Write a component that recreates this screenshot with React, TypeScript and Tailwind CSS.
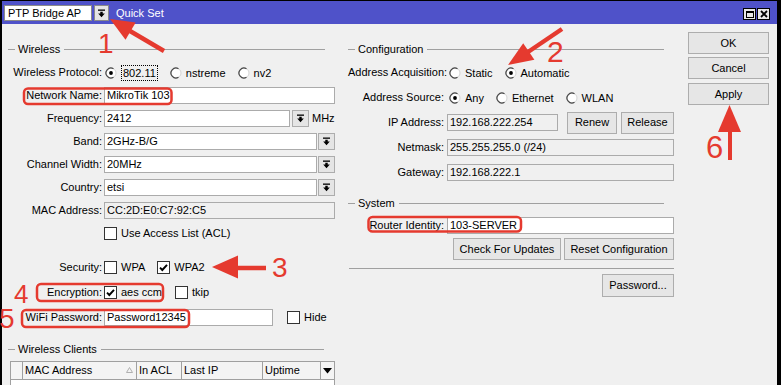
import React from "react";

const RED = "#e53a2f";

function Radio({ checked }: { checked?: boolean }) {
  return (
    <svg width="12" height="12" viewBox="0 0 12 12" className="shrink-0">
      <circle cx="6" cy="6" r="5" fill="#fff" stroke="#d4d4d4" strokeWidth="1" />
      <path d="M8.5 1.67 A5 5 0 1 0 8.5 10.33" fill="none" stroke="#4a4a4a" strokeWidth="1.2" />
      {checked && <circle cx="6" cy="6" r="1.9" fill="#000" />}
    </svg>
  );
}

function RadioItem({ label, checked, focus }: { label: string; checked?: boolean; focus?: boolean }) {
  return (
    <span className="inline-flex items-center gap-[4px]">
      <Radio checked={checked} />
      {focus ? (
        <span className="border border-dotted border-black px-[1px] leading-[14px]">{label}</span>
      ) : (
        <span className="leading-[14px]">{label}</span>
      )}
    </span>
  );
}

function Check({ checked }: { checked?: boolean }) {
  return (
    <span className="w-[13px] h-[13px] border border-[#333] bg-white flex items-center justify-center shrink-0">
      {checked && (
        <svg width="11" height="11" viewBox="0 0 11 11">
          <path d="M2 5.6 L4.3 8 L9 2.8" fill="none" stroke="#000" strokeWidth="1.9" />
        </svg>
      )}
    </span>
  );
}

function DropIcon() {
  return (
    <svg width="9" height="9" viewBox="0 0 9 9">
      <rect x="1" y="0.5" width="7" height="1.3" fill="#000" />
      <path d="M3.3 2.8 H5.7 V4.6 H7.8 L4.5 8.2 L1.2 4.6 H3.3 Z" fill="#000" />
    </svg>
  );
}

function DropBtn({ className = "" }: { className?: string }) {
  return (
    <div className={"w-[17px] h-[17px] border border-[#adadad] bg-[#e5e5e5] flex items-center justify-center shrink-0 " + className}>
      <DropIcon />
    </div>
  );
}

function Input({ value, className = "", disabled }: { value?: string; className?: string; disabled?: boolean }) {
  return (
    <div
      className={
        "h-[17px] border border-[#ababab] px-[2px] leading-[15px] whitespace-nowrap overflow-hidden shrink-0 " +
        (disabled ? "bg-[#f0f0f0] " : "bg-white ") +
        className
      }
    >
      {value}
    </div>
  );
}

function LRow({ label, h = "h-[23px]", children }: { label: string; h?: string; children?: React.ReactNode }) {
  return (
    <div className={"flex items-center " + h}>
      <span className="w-[96px] pr-[2px] text-right shrink-0 whitespace-nowrap">{label}</span>
      {children}
    </div>
  );
}

function RRow({ label, h = "h-[25px]", children }: { label: string; h?: string; children?: React.ReactNode }) {
  return (
    <div className={"flex items-center " + h}>
      <span className="w-[99px] pr-[3px] text-right shrink-0 whitespace-nowrap">{label}</span>
      {children}
    </div>
  );
}

function GroupHeader({ title, className = "" }: { title: string; className?: string }) {
  return (
    <div className={"flex items-center h-[16px] " + className}>
      <div className="w-[7px] h-px bg-[#a0a0a0]" />
      <span className="ml-[3px] mr-[4px] leading-[16px]">{title}</span>
      <div className="flex-1 h-px bg-[#a0a0a0]" />
    </div>
  );
}

function Btn({ children, className = "" }: { children?: React.ReactNode; className?: string }) {
  return (
    <div className={"h-[22px] border border-[#adadad] bg-[#e6e6e6] flex items-center justify-center whitespace-nowrap shrink-0 " + className}>
      {children}
    </div>
  );
}

function Overlay() {
  const box = { fill: "none", stroke: RED, strokeWidth: 2.5 };
  const digit = { fill: RED, fontFamily: "'Liberation Sans', Arial, sans-serif" };
  return (
    <svg className="absolute left-0 top-0 pointer-events-none" width="781" height="385" viewBox="0 0 781 385">
      {/* red boxes */}
      <rect x="24" y="88.5" width="147.5" height="15.5" rx="4" {...box} />
      <rect x="368.5" y="217" width="152.5" height="14.5" rx="4" {...box} />
      <rect x="37" y="284" width="126" height="17" rx="4" {...box} />
      <rect x="22" y="310" width="167" height="17" rx="4" {...box} />

      {/* arrow 1 */}
      <line x1="164" y1="51" x2="130" y2="31" stroke={RED} strokeWidth="4.5" />
      <polygon points="110,19 135.7,22.6 125.5,39.8" fill={RED} />
      {/* arrow 2 */}
      <line x1="562" y1="29" x2="528" y2="52" stroke={RED} strokeWidth="4.5" />
      <polygon points="508,65 534.4,59.8 523.2,43.2" fill={RED} />
      {/* arrow 3 */}
      <line x1="236" y1="268" x2="266" y2="268" stroke={RED} strokeWidth="4.5" />
      <polygon points="212,267 238,255.5 238,278.5" fill={RED} />
      {/* arrow 6 */}
      <line x1="730" y1="130" x2="730" y2="160" stroke={RED} strokeWidth="4" />
      <polygon points="729.5,105 718,132 741,132" fill={RED} />

      <text x="98" y="53" fontSize="28" style={digit}>1</text>
      <text x="547" y="62" fontSize="30" style={digit}>2</text>
      <text x="272" y="277" fontSize="28" style={digit}>3</text>
      <text x="14" y="303" fontSize="26" style={digit}>4</text>
      <text x="-1" y="328" fontSize="28" style={digit}>5</text>
      <text x="706" y="158" fontSize="31" style={digit}>6</text>
    </svg>
  );
}

export default function App() {
  return (
    <div className="relative w-[781px] h-[385px] overflow-hidden font-['Liberation_Sans',Arial,sans-serif] text-[11px] text-black">
      <div className="w-[781px] h-[385px] border-l-2 border-t border-r-4 border-black bg-[#f0f0f0] flex flex-col">
        {/* Title bar */}
        <div className="h-[23px] bg-[#4f52c9] flex items-start pt-[4px] pl-[2px] shrink-0">
          <div className="w-[88px] h-[16px] bg-white border border-[#8a8a8a] pl-[3px] leading-[14px] whitespace-nowrap">PTP Bridge AP</div>
          <div className="ml-[2px] w-[15px] h-[16px] bg-[#e5e5e5] border border-[#8a8a8a] flex items-center justify-center">
            <DropIcon />
          </div>
          <span className="ml-[7px] text-white leading-[16px]">Quick Set</span>
          <div className="ml-auto mr-[7px] mt-[3px] flex gap-[1px]">
            <div className="w-[13px] h-[12px] bg-[#e8e8e8] border border-black flex items-center justify-center">
              <div className="w-[8px] h-[7px] border border-black border-t-2" />
            </div>
            <div className="w-[13px] h-[12px] bg-[#e8e8e8] border border-black flex items-center justify-center">
              <svg width="8" height="8" viewBox="0 0 8 8">
                <path d="M1 1 L7 7 M7 1 L1 7" stroke="#000" strokeWidth="1.8" />
              </svg>
            </div>
          </div>
        </div>

        {/* Body */}
        <div className="flex-1 flex pl-[6px] overflow-hidden">
          {/* Left column */}
          <div className="w-[327px] shrink-0 pt-[17px] flex flex-col">
            <GroupHeader title="Wireless" className="pr-[10px]" />
            <div className="mt-[4px] flex flex-col">
              <LRow label="Wireless Protocol:">
                <div className="flex items-center gap-[12px] ml-[1px]">
                  <RadioItem label="802.11" checked focus />
                  <RadioItem label="nstreme" />
                  <RadioItem label="nv2" />
                </div>
              </LRow>
              <LRow label="Network Name:">
                <Input value="MikroTik 103" className="w-[231px]" />
              </LRow>
              <LRow label="Frequency:">
                <Input value="2412" className="w-[186px]" />
                <DropBtn className="ml-[2px]" />
                <span className="ml-[3px]">MHz</span>
              </LRow>
              <LRow label="Band:">
                <Input value="2GHz-B/G" className="w-[213px]" />
                <DropBtn className="ml-[1px]" />
              </LRow>
              <LRow label="Channel Width:">
                <Input value="20MHz" className="w-[213px]" />
                <DropBtn className="ml-[1px]" />
              </LRow>
              <LRow label="Country:">
                <Input value="etsi" className="w-[213px]" />
                <DropBtn className="ml-[1px]" />
              </LRow>
              <LRow label="MAC Address:">
                <Input value="CC:2D:E0:C7:92:C5" className="w-[231px]" disabled />
              </LRow>
              <LRow label="">
                <Check />
                <span className="ml-[4px]">Use Access List (ACL)</span>
              </LRow>
            </div>
            <div className="h-px bg-[#a0a0a0] mt-[7px] ml-[2px]" />
            <div className="mt-[3px] flex flex-col">
              <LRow label="Security:" h="h-[25px]">
                <Check />
                <span className="ml-[4px]">WPA</span>
                <span className="ml-[12px]"><Check checked /></span>
                <span className="ml-[4px]">WPA2</span>
              </LRow>
              <LRow label="Encryption:" h="h-[25px]">
                <Check checked />
                <span className="ml-[4px]">aes ccm</span>
                <span className="ml-[13px]"><Check /></span>
                <span className="ml-[4px]">tkip</span>
              </LRow>
              <LRow label="WiFi Password:" h="h-[25px]">
                <Input value="Password12345" className="w-[169px]" />
                <span className="ml-[14px]"><Check /></span>
                <span className="ml-[4px]">Hide</span>
              </LRow>
            </div>
            <GroupHeader title="Wireless Clients" className="mt-[11px] pr-[11px]" />
            <div className="mt-[4px] ml-[2px] w-[325px] flex flex-col">
              <div className="flex h-[19px] border border-[#a0a0a0] bg-[#f4f4f4]">
                <div className="w-[12px] border-r border-[#a0a0a0]" />
                <div className="w-[114px] border-r border-[#a0a0a0] flex items-center pl-[2px] relative">
                  MAC Address
                  <svg className="absolute right-[3px] top-[5px]" width="7" height="6" viewBox="0 0 7 6">
                    <path d="M3.5 0.5 L6.5 5.5 H0.5 Z" fill="none" stroke="#b0b0b0" strokeWidth="1" />
                  </svg>
                </div>
                <div className="w-[45px] border-r border-[#a0a0a0] flex items-center pl-[2px]">In ACL</div>
                <div className="w-[81px] border-r border-[#a0a0a0] flex items-center pl-[2px]">Last IP</div>
                <div className="w-[58px] border-r border-[#a0a0a0] flex items-center pl-[2px]">Uptime</div>
                <div className="flex-1 flex items-center justify-center">
                  <svg width="9" height="6" viewBox="0 0 9 6">
                    <path d="M0 0 H9 L4.5 5.5 Z" fill="#000" />
                  </svg>
                </div>
              </div>
              <div className="h-[10px] bg-white border-l border-r border-[#a0a0a0]" />
            </div>
          </div>

          {/* Right column */}
          <div className="w-[326px] shrink-0 ml-[13px] pt-[17px] flex flex-col">
            <GroupHeader title="Configuration" className="pr-[10px]" />
            <div className="mt-[3px] flex flex-col">
              <RRow label="Address Acquisition:">
                <div className="flex items-center gap-[12px] ml-[2px]">
                  <RadioItem label="Static" />
                  <RadioItem label="Automatic" checked />
                </div>
              </RRow>
              <RRow label="Address Source:">
                <div className="flex items-center gap-[12px] ml-[2px]">
                  <RadioItem label="Any" checked />
                  <RadioItem label="Ethernet" />
                  <RadioItem label="WLAN" />
                </div>
              </RRow>
              <RRow label="IP Address:">
                <Input value="192.168.222.254" className="w-[111px]" disabled />
                <Btn className="w-[50px] ml-[9px]">Renew</Btn>
                <Btn className="w-[53px] ml-[4px]">Release</Btn>
              </RRow>
              <RRow label="Netmask:">
                <Input value="255.255.255.0 (/24)" className="w-[227px]" disabled />
              </RRow>
              <RRow label="Gateway:">
                <Input value="192.168.222.1" className="w-[227px]" disabled />
              </RRow>
            </div>
            <GroupHeader title="System" className="mt-[10px] pr-[10px]" />
            <RRow label="Router Identity:" h="h-[22px] mt-[3px]">
              <Input value="103-SERVER" className="w-[227px]" />
            </RRow>
            <div className="flex justify-end gap-[3px] mt-[2px]">
              <Btn className="w-[108px]">Check For Updates</Btn>
              <Btn className="w-[110px]">Reset Configuration</Btn>
            </div>
            <div className="h-px bg-[#a0a0a0] mt-[8px] ml-[1px]" />
            <div className="flex justify-end mt-[5px]">
              <Btn className="w-[72px] h-[23px]">Password...</Btn>
            </div>
          </div>

          {/* Buttons column */}
          <div className="w-[81px] shrink-0 ml-[14px] pt-[8px] flex flex-col">
            <Btn className="w-[81px] border-[#333]">OK</Btn>
            <Btn className="w-[81px] mt-[3px]">Cancel</Btn>
            <Btn className="w-[81px] mt-[4px]">Apply</Btn>
          </div>
        </div>
      </div>
      <Overlay />
    </div>
  );
}
